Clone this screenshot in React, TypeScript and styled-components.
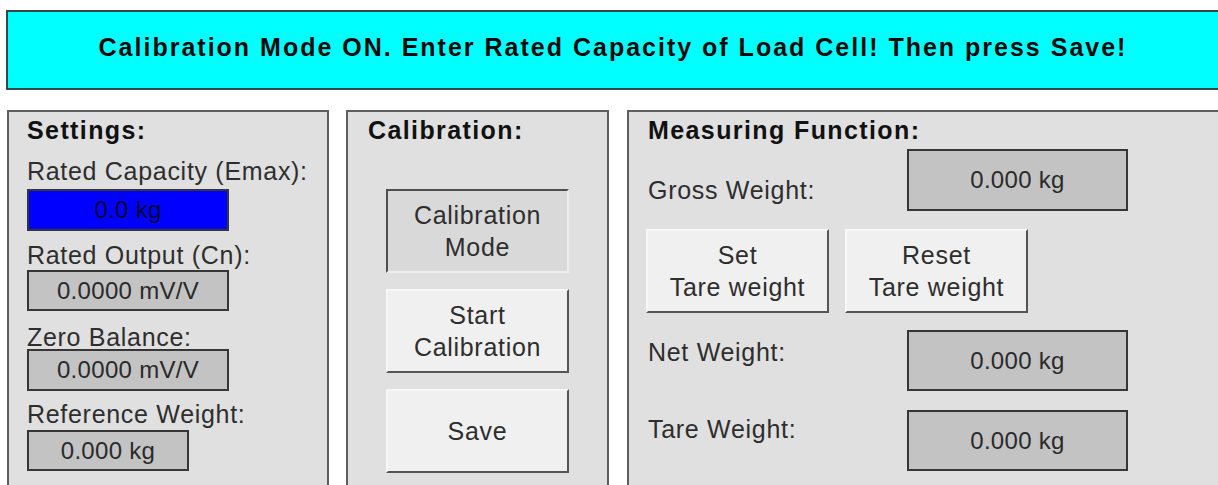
import styled, { createGlobalStyle } from 'styled-components';

const GlobalStyle = createGlobalStyle`
  body {
    margin: 0;
    background: #ffffff;
    overflow: hidden;
    font-family: 'Liberation Sans', Arial, sans-serif;
  }
`;

const Page = styled.div`
  width: 1218px;
  height: 485px;
  padding: 10px 0 0 6px;
  box-sizing: border-box;
  overflow: hidden;
`;

const Banner = styled.div`
  width: 1214px;
  height: 80px;
  box-sizing: border-box;
  display: flex;
  align-items: center;
  justify-content: center;
  padding-bottom: 6px;
  background-color: #00ffff;
  border: 2px solid #2f4a4a;
  font-weight: 700;
  font-size: 25px;
  letter-spacing: 2px;
  color: #0a0a0a;
  white-space: nowrap;
`;

const Panels = styled.div`
  display: flex;
  margin: 20px 0 0 1px;
`;

const Panel = styled.section<{ $width: number; $gap: number; $pad: number }>`
  width: ${(p) => p.$width}px;
  height: 400px;
  flex-shrink: 0;
  box-sizing: border-box;
  margin-left: ${(p) => p.$gap}px;
  padding: 6px 0 0 ${(p) => p.$pad}px;
  display: flex;
  flex-direction: column;
  align-items: flex-start;
  background-color: #e0e0e0;
  border: 2px solid #5e5e5e;
`;

const Title = styled.div`
  font-weight: 700;
  font-size: 25px;
  line-height: 24px;
  letter-spacing: 1.4px;
  color: #111111;
  white-space: nowrap;
`;

const Label = styled.div<{ $top?: number; $width?: number }>`
  margin-top: ${(p) => p.$top ?? 0}px;
  width: ${(p) => (p.$width ? `${p.$width}px` : 'auto')};
  flex-shrink: 0;
  font-size: 25px;
  line-height: 24px;
  letter-spacing: 0.7px;
  color: #2e2e2e;
  white-space: nowrap;
`;

const Field = styled.div<{ $width: number; $height: number; $top?: number; $blue?: boolean }>`
  width: ${(p) => p.$width}px;
  height: ${(p) => p.$height}px;
  margin-top: ${(p) => p.$top ?? 0}px;
  flex-shrink: 0;
  box-sizing: border-box;
  display: flex;
  align-items: center;
  justify-content: center;
  background-color: ${(p) => (p.$blue ? '#0000ff' : '#c3c3c3')};
  border: 2px solid #363636;
  font-size: 24px;
  letter-spacing: 0.3px;
  color: ${(p) => (p.$blue ? '#00002e' : '#2a2a2a')};
  white-space: nowrap;
`;

const ButtonStack = styled.div`
  align-self: stretch;
  display: flex;
  flex-direction: column;
  align-items: center;
  gap: 16px;
  margin: 47px 0 0 -20px;
`;

const WinButton = styled.button<{ $pressed?: boolean }>`
  width: 183px;
  height: 84px;
  box-sizing: border-box;
  padding: 0;
  display: flex;
  align-items: center;
  justify-content: center;
  font-family: inherit;
  font-size: 25px;
  line-height: 32px;
  letter-spacing: 0.7px;
  color: #2e2e2e;
  text-align: center;
  background-color: ${(p) => (p.$pressed ? '#d9d9d9' : '#f0f0f0')};
  border-style: solid;
  border-width: 2px;
  border-color: ${(p) =>
    p.$pressed
      ? '#4e4e4e #eeeeee #eeeeee #4e4e4e'
      : '#f7f7f7 #555555 #555555 #f7f7f7'};
  cursor: pointer;
`;

const MeasureRow = styled.div<{ $top: number }>`
  display: flex;
  align-items: flex-start;
  margin-top: ${(p) => p.$top}px;
`;

const TareButtons = styled.div`
  display: flex;
  gap: 16px;
  margin: 18px 0 0 -2px;
`;

export default function App() {
  return (
    <Page>
      <GlobalStyle />
      <Banner>Calibration Mode ON. Enter Rated Capacity of Load Cell! Then press Save!</Banner>
      <Panels>
        <Panel $width={322} $gap={0} $pad={18}>
          <Title>Settings:</Title>
          <Label $top={17}>Rated Capacity (Emax):</Label>
          <Field $width={202} $height={42} $top={6} $blue>0.0 kg</Field>
          <Label $top={12}>Rated Output (Cn):</Label>
          <Field $width={202} $height={41} $top={3}>0.0000 mV/V</Field>
          <Label $top={14}>Zero Balance:</Label>
          <Field $width={202} $height={42} $top={0}>0.0000 mV/V</Field>
          <Label $top={11}>Reference Weight:</Label>
          <Field $width={162} $height={41} $top={4}>0.000 kg</Field>
        </Panel>

        <Panel $width={263} $gap={17} $pad={20}>
          <Title>Calibration:</Title>
          <ButtonStack>
            <WinButton $pressed>Calibration<br />Mode</WinButton>
            <WinButton>Start<br />Calibration</WinButton>
            <WinButton>Save</WinButton>
          </ButtonStack>
        </Panel>

        <Panel $width={620} $gap={18} $pad={19}>
          <Title>Measuring Function:</Title>
          <MeasureRow $top={7}>
            <Label $top={29} $width={259}>Gross Weight:</Label>
            <Field $width={221} $height={62}>0.000 kg</Field>
          </MeasureRow>
          <TareButtons>
            <WinButton>Set<br />Tare weight</WinButton>
            <WinButton>Reset<br />Tare weight</WinButton>
          </TareButtons>
          <MeasureRow $top={17}>
            <Label $top={10} $width={259}>Net Weight:</Label>
            <Field $width={221} $height={61}>0.000 kg</Field>
          </MeasureRow>
          <MeasureRow $top={19}>
            <Label $top={7} $width={259}>Tare Weight:</Label>
            <Field $width={221} $height={61}>0.000 kg</Field>
          </MeasureRow>
        </Panel>
      </Panels>
    </Page>
  );
}
